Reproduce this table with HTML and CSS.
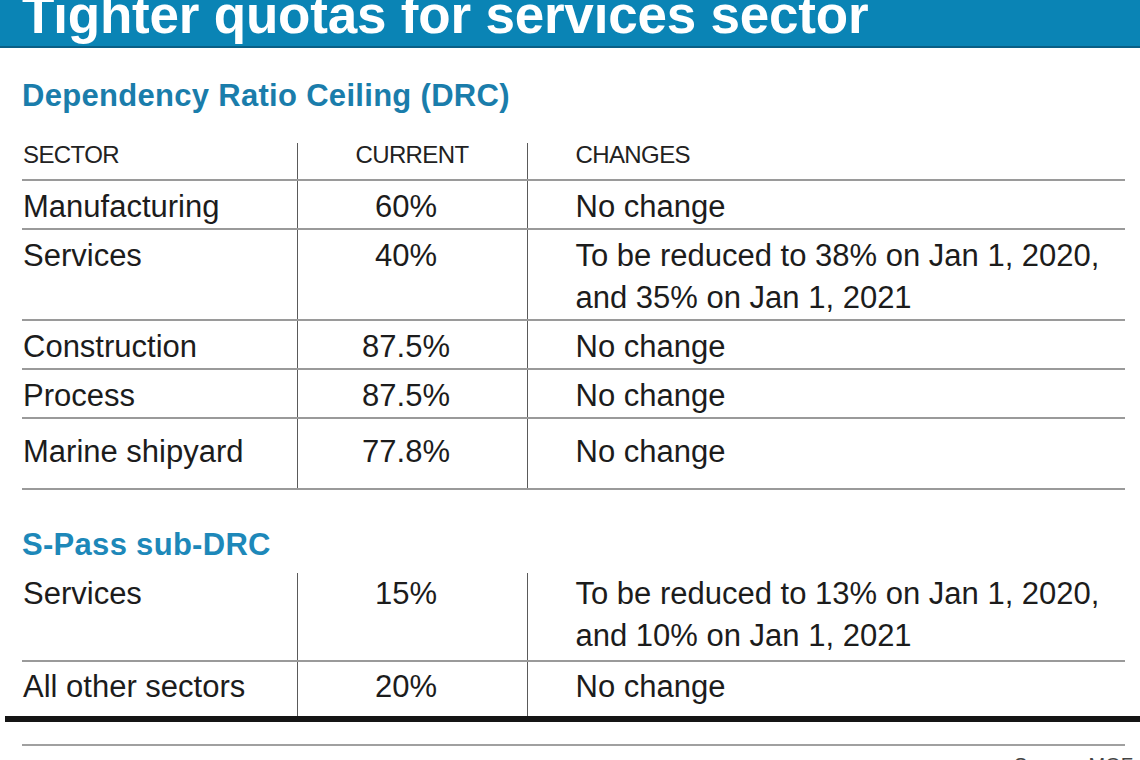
FILE: index.html
```html
<!DOCTYPE html>
<html lang="en">
<head>
<meta charset="utf-8">
<title>Tighter quotas for services sector</title>
<link rel="stylesheet" href="styles.css">
</head>
<body>
<header class="banner">
  <h1 class="banner-title">Tighter quotas for services sector</h1>
</header>
<main class="content">
  <h2 class="section-title section-title-first">Dependency Ratio Ceiling (DRC)</h2>
  <table class="quota-table quota-table-main">
    <colgroup><col class="col-sector"><col class="col-current"><col class="col-changes"></colgroup>
    <thead>
      <tr>
        <th class="cell-sector">SECTOR</th>
        <th class="cell-current">CURRENT</th>
        <th class="cell-changes">CHANGES</th>
      </tr>
    </thead>
    <tbody>
      <tr>
        <td class="cell-sector">Manufacturing</td>
        <td class="cell-current">60%</td>
        <td class="cell-changes">No change</td>
      </tr>
      <tr>
        <td class="cell-sector">Services</td>
        <td class="cell-current">40%</td>
        <td class="cell-changes">To be reduced to 38% on Jan 1, 2020,<br>and 35% on Jan 1, 2021</td>
      </tr>
      <tr>
        <td class="cell-sector">Construction</td>
        <td class="cell-current">87.5%</td>
        <td class="cell-changes">No change</td>
      </tr>
      <tr>
        <td class="cell-sector">Process</td>
        <td class="cell-current">87.5%</td>
        <td class="cell-changes">No change</td>
      </tr>
      <tr class="row-last">
        <td class="cell-sector">Marine shipyard</td>
        <td class="cell-current">77.8%</td>
        <td class="cell-changes">No change</td>
      </tr>
    </tbody>
  </table>

  <h2 class="section-title section-title-second">S-Pass sub-DRC</h2>
  <table class="quota-table quota-table-sub">
    <colgroup><col class="col-sector"><col class="col-current"><col class="col-changes"></colgroup>
    <tbody>
      <tr>
        <td class="cell-sector">Services</td>
        <td class="cell-current">15%</td>
        <td class="cell-changes">To be reduced to 13% on Jan 1, 2020,<br>and 10% on Jan 1, 2021</td>
      </tr>
      <tr class="row-last">
        <td class="cell-sector">All other sectors</td>
        <td class="cell-current">20%</td>
        <td class="cell-changes">No change</td>
      </tr>
    </tbody>
  </table>
  <div class="rule-thick"></div>
  <div class="rule-thin"></div>
  <p class="source">Source: MOF</p>
</main>
</body>
</html>
```

FILE: styles.css
```css
html, body {
  margin: 0;
  padding: 0;
  background: #ffffff;
}

body {
  width: 1140px;
  height: 760px;
  overflow: hidden;
  font-family: "Liberation Sans", Arial, sans-serif;
  color: #1c1c1c;
}

.banner {
  height: 46px;
  background: #0a84b5;
  border-bottom: 2px solid #0a5f86;
  overflow: hidden;
  padding-left: 22px;
}

.banner-title {
  margin: 0;
  font-size: 53px;
  line-height: 30px;
  font-weight: 700;
  color: #ffffff;
  letter-spacing: -0.2px;
  white-space: nowrap;
}

.content {
  padding: 0 15px 0 22px;
}

.section-title {
  margin: 0;
  font-size: 31px;
  line-height: 36px;
  font-weight: 700;
  letter-spacing: 0.3px;
  color: #1a7dab;
}

.section-title-first {
  padding-top: 30px;
}

.section-title-second {
  margin-top: 37px;
  color: #1d88b9;
}

.quota-table {
  width: 100%;
  border-collapse: collapse;
  table-layout: fixed;
}

.col-sector { width: 275px; }
.col-current { width: 230px; }

.quota-table-main {
  margin-top: 29px;
}

.quota-table-sub {
  margin-top: 10px;
}

.quota-table th {
  font-weight: 400;
  font-size: 24px;
  letter-spacing: -0.6px;
  line-height: 24px;
  padding-top: 0;
  padding-bottom: 12px;
  color: #222222;
}

.quota-table td {
  font-size: 31px;
  line-height: 42px;
  padding-top: 5px;
  padding-bottom: 0;
  vertical-align: top;
  white-space: nowrap;
}

.quota-table tr {
  border-bottom: 2px solid #9a9a9a;
}

.quota-table-main tr.row-last td {
  padding-top: 12px;
  padding-bottom: 15px;
}

.quota-table-sub tr:first-child td {
  padding-top: 0;
  padding-bottom: 3px;
}

.quota-table-sub tr.row-last {
  border-bottom: none;
}

.quota-table-sub tr.row-last td {
  padding-top: 4px;
  padding-bottom: 8px;
}

.quota-table .cell-sector {
  text-align: left;
  padding-left: 1px;
  padding-right: 0;
}

.quota-table .cell-current {
  text-align: center;
  border-left: 1px solid #5a5a5a;
  padding-left: 0;
  padding-right: 0;
}

.quota-table td.cell-current {
  padding-right: 12px;
}

.quota-table .cell-changes {
  text-align: left;
  border-left: 1px solid #5a5a5a;
  padding-left: 48px;
  padding-right: 0;
}

.rule-thick {
  height: 6px;
  background: #151515;
  margin: 0 -15px 0 -17px;
}

.rule-thin {
  height: 2px;
  background: #a0a0a0;
  margin-top: 22px;
}

.source {
  margin: 7px -8px 0 0;
  text-align: right;
  font-size: 20px;
  line-height: 24px;
  color: #444444;
}
```
